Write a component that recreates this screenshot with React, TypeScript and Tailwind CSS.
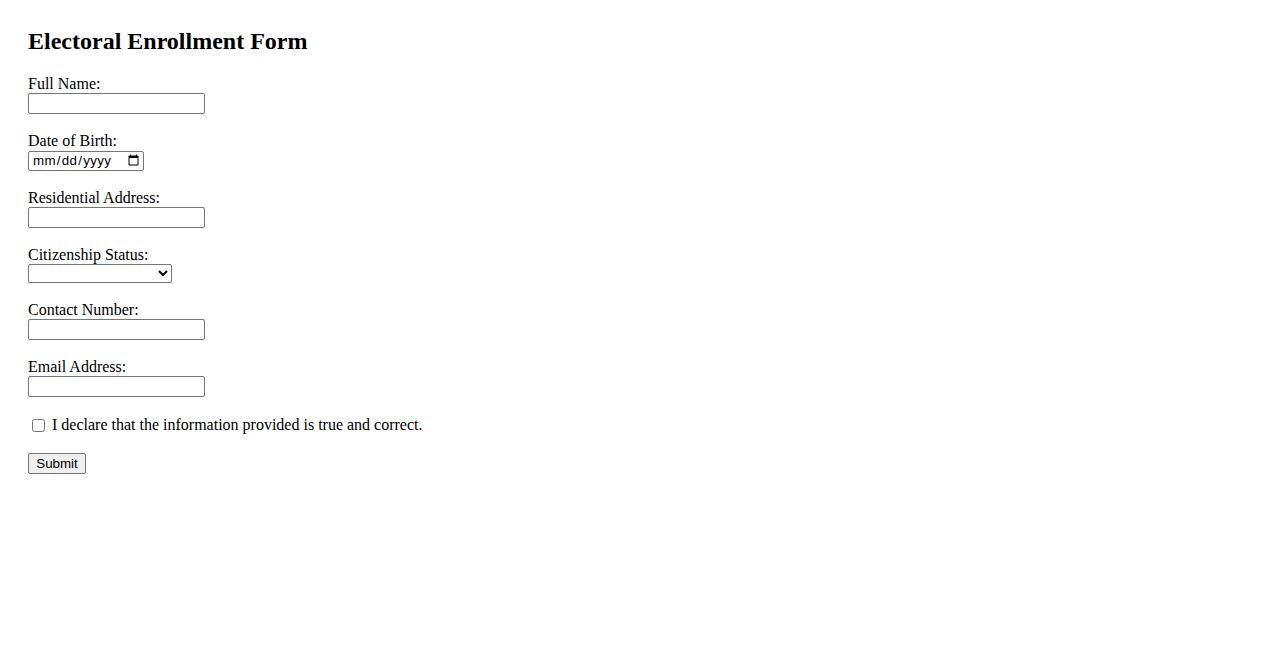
import React from 'react';

const serif = 'font-["Liberation_Serif","Times_New_Roman",serif]';
const control =
  'block h-[21px] w-[177px] rounded-[2px] border border-[#767676] bg-white px-[2px] text-[13.33px] font-["Liberation_Sans",Arial,sans-serif] text-black';

const fields = [
  { id: 'fullName', label: 'Full Name:', type: 'text' },
  { id: 'dob', label: 'Date of Birth:', type: 'date' },
  { id: 'address', label: 'Residential Address:', type: 'text' },
  { id: 'citizenship', label: 'Citizenship Status:', type: 'select' },
  { id: 'phone', label: 'Contact Number:', type: 'tel' },
  { id: 'email', label: 'Email Address:', type: 'email' },
];

export default function App() {
  return (
    <div className={`min-h-screen bg-white px-[28px] pt-[28px] text-black ${serif}`}>
      <h2 className="mb-[20px] text-[24px] font-bold leading-[27px]">Electoral Enrollment Form</h2>

      <form onSubmit={e => e.preventDefault()}>
        {fields.map(f => (
          <div key={f.id} className="mb-[18px]">
            <label htmlFor={f.id} className="block text-[16px] leading-[18px]">
              {f.label}
            </label>
            {f.type === 'select' ? (
              <select
                id={f.id}
                className="block h-[19px] w-[144px] rounded-[2px] border border-[#767676] bg-white text-[13.33px] font-['Liberation_Sans',Arial,sans-serif]"
                defaultValue=""
              >
                <option value=""></option>
                <option value="citizen">Citizen</option>
                <option value="permanent">Permanent Resident</option>
                <option value="other">Other</option>
              </select>
            ) : f.type === 'date' ? (
              <input
                id={f.id}
                type="date"
                className="mt-[1px] block h-[20px] w-[116px] rounded-[2px] border border-[#767676] bg-white pl-[3px] pr-[1px] text-[13.33px] tracking-[0.3px] font-['Liberation_Sans',Arial,sans-serif]"
              />
            ) : (
              <input id={f.id} type={f.type} className={control} />
            )}
          </div>
        ))}

        <div className="flex h-[20px] items-end pb-[1px] text-[16px] leading-[18px]">
          <input type="checkbox" id="declare" className="mb-[2px] ml-[4px] mr-[7px] h-[13px] w-[13px]" />
          <label htmlFor="declare">I declare that the information provided is true and correct.</label>
        </div>

        <button
          type="submit"
          className="mt-[18px] block h-[21px] w-[58px] rounded-[2px] border border-[#767676] bg-[#efefef] text-center text-[13.33px] leading-[15px] font-['Liberation_Sans',Arial,sans-serif] text-black"
        >
          Submit
        </button>
      </form>
    </div>
  );
}
